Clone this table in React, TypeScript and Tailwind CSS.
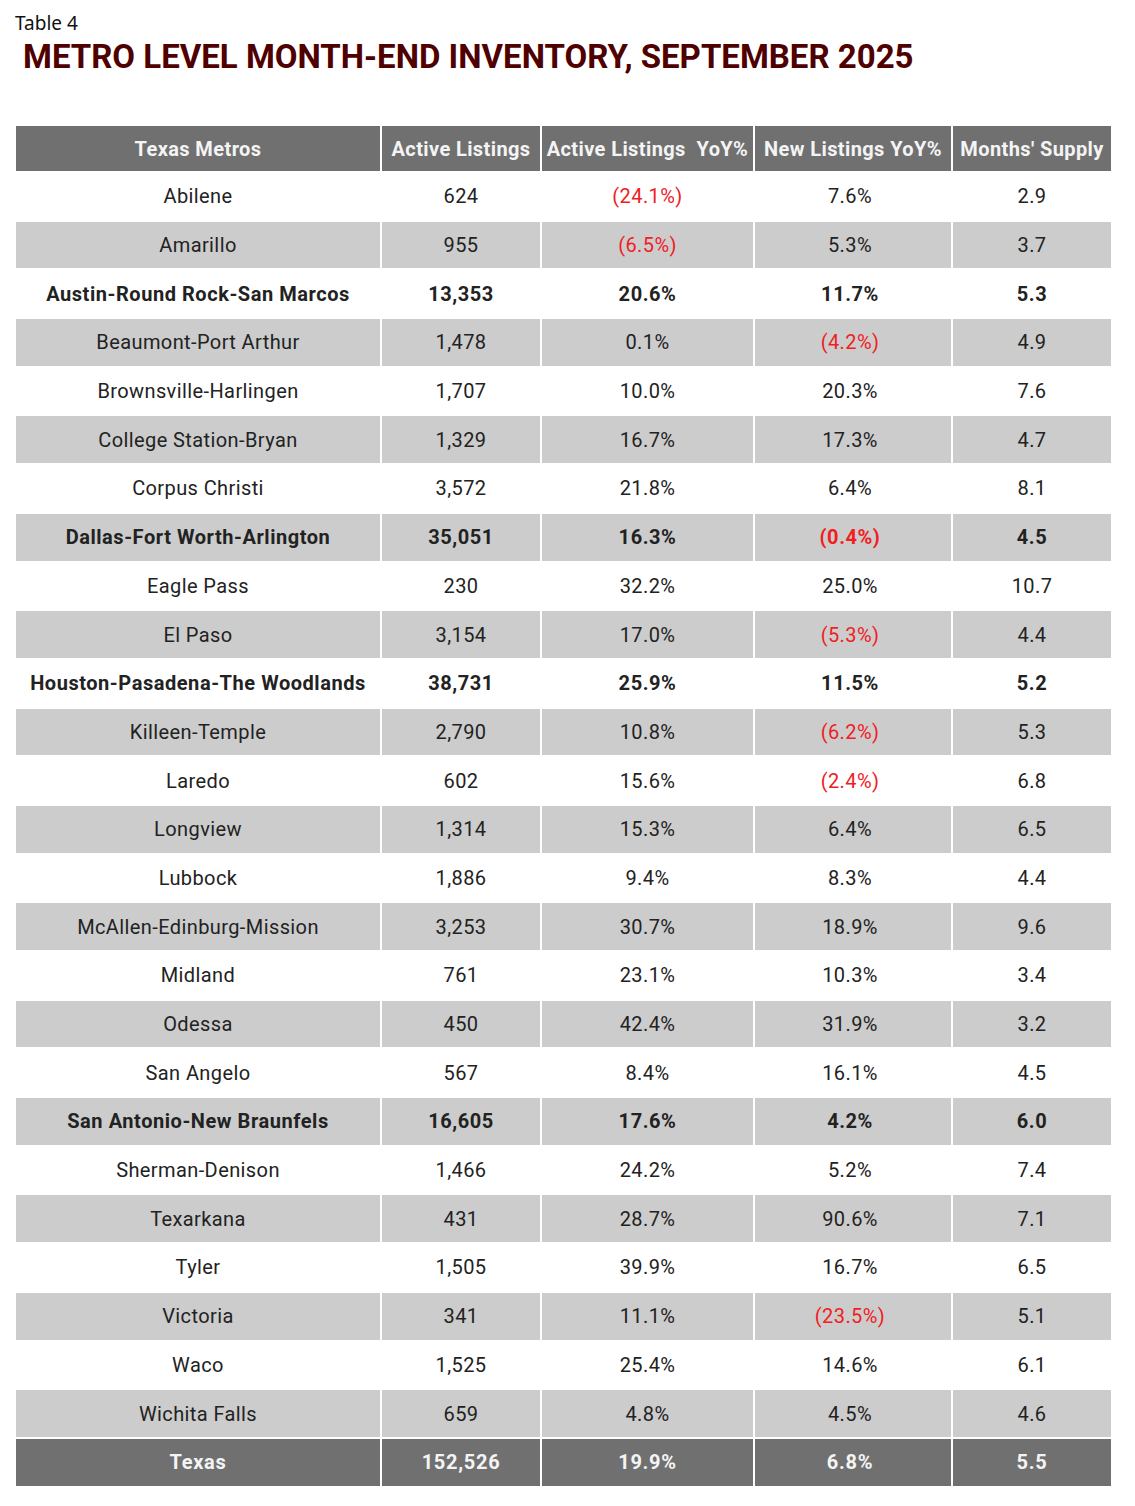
type Row = {
  metro: string;
  active: string;
  activeYoy: string;
  newYoy: string;
  supply: string;
  bold?: boolean;
};

const ROWS: Row[] = [
  { metro: 'Abilene', active: '624', activeYoy: '(24.1%)', newYoy: '7.6%', supply: '2.9' },
  { metro: 'Amarillo', active: '955', activeYoy: '(6.5%)', newYoy: '5.3%', supply: '3.7' },
  { metro: 'Austin-Round Rock-San Marcos', active: '13,353', activeYoy: '20.6%', newYoy: '11.7%', supply: '5.3', bold: true },
  { metro: 'Beaumont-Port Arthur', active: '1,478', activeYoy: '0.1%', newYoy: '(4.2%)', supply: '4.9' },
  { metro: 'Brownsville-Harlingen', active: '1,707', activeYoy: '10.0%', newYoy: '20.3%', supply: '7.6' },
  { metro: 'College Station-Bryan', active: '1,329', activeYoy: '16.7%', newYoy: '17.3%', supply: '4.7' },
  { metro: 'Corpus Christi', active: '3,572', activeYoy: '21.8%', newYoy: '6.4%', supply: '8.1' },
  { metro: 'Dallas-Fort Worth-Arlington', active: '35,051', activeYoy: '16.3%', newYoy: '(0.4%)', supply: '4.5', bold: true },
  { metro: 'Eagle Pass', active: '230', activeYoy: '32.2%', newYoy: '25.0%', supply: '10.7' },
  { metro: 'El Paso', active: '3,154', activeYoy: '17.0%', newYoy: '(5.3%)', supply: '4.4' },
  { metro: 'Houston-Pasadena-The Woodlands', active: '38,731', activeYoy: '25.9%', newYoy: '11.5%', supply: '5.2', bold: true },
  { metro: 'Killeen-Temple', active: '2,790', activeYoy: '10.8%', newYoy: '(6.2%)', supply: '5.3' },
  { metro: 'Laredo', active: '602', activeYoy: '15.6%', newYoy: '(2.4%)', supply: '6.8' },
  { metro: 'Longview', active: '1,314', activeYoy: '15.3%', newYoy: '6.4%', supply: '6.5' },
  { metro: 'Lubbock', active: '1,886', activeYoy: '9.4%', newYoy: '8.3%', supply: '4.4' },
  { metro: 'McAllen-Edinburg-Mission', active: '3,253', activeYoy: '30.7%', newYoy: '18.9%', supply: '9.6' },
  { metro: 'Midland', active: '761', activeYoy: '23.1%', newYoy: '10.3%', supply: '3.4' },
  { metro: 'Odessa', active: '450', activeYoy: '42.4%', newYoy: '31.9%', supply: '3.2' },
  { metro: 'San Angelo', active: '567', activeYoy: '8.4%', newYoy: '16.1%', supply: '4.5' },
  { metro: 'San Antonio-New Braunfels', active: '16,605', activeYoy: '17.6%', newYoy: '4.2%', supply: '6.0', bold: true },
  { metro: 'Sherman-Denison', active: '1,466', activeYoy: '24.2%', newYoy: '5.2%', supply: '7.4' },
  { metro: 'Texarkana', active: '431', activeYoy: '28.7%', newYoy: '90.6%', supply: '7.1' },
  { metro: 'Tyler', active: '1,505', activeYoy: '39.9%', newYoy: '16.7%', supply: '6.5' },
  { metro: 'Victoria', active: '341', activeYoy: '11.1%', newYoy: '(23.5%)', supply: '5.1' },
  { metro: 'Waco', active: '1,525', activeYoy: '25.4%', newYoy: '14.6%', supply: '6.1' },
  { metro: 'Wichita Falls', active: '659', activeYoy: '4.8%', newYoy: '4.5%', supply: '4.6' },
];

const neg = (v: string) => v.startsWith('(');

export default function App() {
  return (
    <div className="min-h-[1506px] w-[1135px] bg-white font-['Roboto',sans-serif] text-[#222]">
      <div className="pl-[15px] pt-[10px] font-['Noto_Sans',sans-serif] text-[19px] leading-[26px] text-[#111]">
        Table 4
      </div>
      <h1 className="pl-[23px] pt-[1px] text-[33px] font-bold leading-[40px] text-[#4f0000]">
        METRO LEVEL MONTH-END INVENTORY, SEPTEMBER 2025
      </h1>

      <table className="ml-[14px] mt-[47px] w-[1097px] table-fixed border-collapse text-center text-[20px] tracking-[0.4px]">
        <colgroup>
          <col className="w-[366px]" />
          <col className="w-[160px]" />
          <col className="w-[213px]" />
          <col className="w-[198px]" />
          <col className="w-[160px]" />
        </colgroup>
        <thead>
          <tr className="h-[47px] bg-[#707070] font-bold text-[#f4f4f4]">
            <th className="border-2 border-white whitespace-pre">Texas Metros</th>
            <th className="border-2 border-white whitespace-pre">Active Listings</th>
            <th className="border-2 border-white whitespace-pre">Active Listings  YoY%</th>
            <th className="border-2 border-white whitespace-pre">New Listings YoY%</th>
            <th className="border-2 border-white whitespace-pre">Months' Supply</th>
          </tr>
        </thead>
        <tbody>
          {ROWS.map((r, i) => (
            <tr
              key={r.metro}
              className={`h-[48.7px] ${i % 2 === 1 ? 'bg-[#cccccc]' : 'bg-white'} ${r.bold ? 'font-bold tracking-[0.55px]' : ''}`}
            >
              <td className="border-2 border-white">{r.metro}</td>
              <td className="border-2 border-white">{r.active}</td>
              <td className={`border-2 border-white ${neg(r.activeYoy) ? 'text-[#f0201f]' : ''}`}>{r.activeYoy}</td>
              <td className={`border-2 border-white pr-[6px] ${neg(r.newYoy) ? 'text-[#f0201f]' : ''}`}>{r.newYoy}</td>
              <td className="border-2 border-white">{r.supply}</td>
            </tr>
          ))}
          <tr className="h-[48.7px] bg-[#707070] font-bold tracking-[0.7px] text-[#f4f4f4]">
            <td className="border-2 border-white">Texas</td>
            <td className="border-2 border-white">152,526</td>
            <td className="border-2 border-white">19.9%</td>
            <td className="border-2 border-white pr-[6px]">6.8%</td>
            <td className="border-2 border-white">5.5</td>
          </tr>
        </tbody>
      </table>
    </div>
  );
}
